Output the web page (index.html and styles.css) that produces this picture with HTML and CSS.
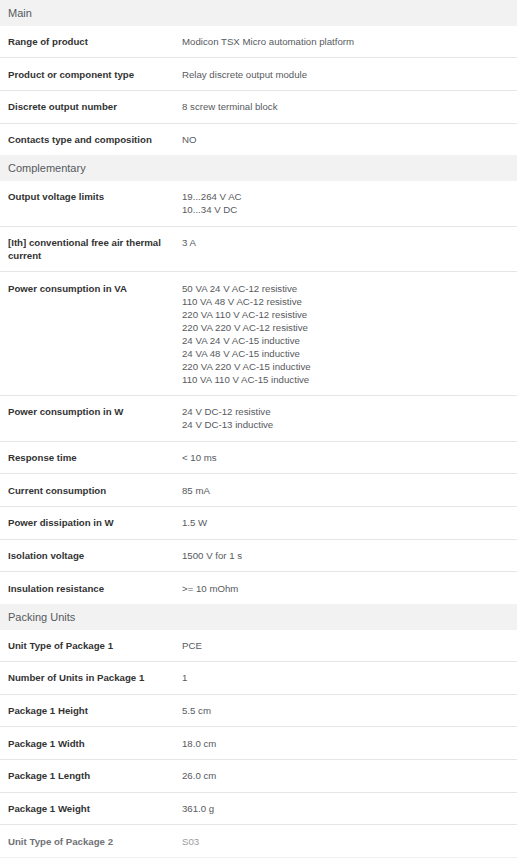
FILE: index.html
```html
<!DOCTYPE html>
<html lang="en">
<head>
<meta charset="utf-8">
<title>Characteristics</title>
<link rel="stylesheet" href="styles.css">
</head>
<body>
<div class="specs">
  <section class="group">
    <h2 class="group-title">Main</h2>
    <div class="row"><div class="label">Range of product</div><div class="value">Modicon TSX Micro automation platform</div></div>
    <div class="row"><div class="label">Product or component type</div><div class="value">Relay discrete output module</div></div>
    <div class="row"><div class="label">Discrete output number</div><div class="value">8 screw terminal block</div></div>
    <div class="row"><div class="label">Contacts type and composition</div><div class="value">NO</div></div>
  </section>
  <section class="group">
    <h2 class="group-title">Complementary</h2>
    <div class="row"><div class="label">Output voltage limits</div><div class="value">19...264 V AC<br>10...34 V DC</div></div>
    <div class="row"><div class="label">[Ith] conventional free air thermal current</div><div class="value">3 A</div></div>
    <div class="row"><div class="label">Power consumption in VA</div><div class="value">50 VA 24 V AC-12 resistive<br>110 VA 48 V AC-12 resistive<br>220 VA 110 V AC-12 resistive<br>220 VA 220 V AC-12 resistive<br>24 VA 24 V AC-15 inductive<br>24 VA 48 V AC-15 inductive<br>220 VA 220 V AC-15 inductive<br>110 VA 110 V AC-15 inductive</div></div>
    <div class="row"><div class="label">Power consumption in W</div><div class="value">24 V DC-12 resistive<br>24 V DC-13 inductive</div></div>
    <div class="row"><div class="label">Response time</div><div class="value">&lt; 10 ms</div></div>
    <div class="row"><div class="label">Current consumption</div><div class="value">85 mA</div></div>
    <div class="row"><div class="label">Power dissipation in W</div><div class="value">1.5 W</div></div>
    <div class="row"><div class="label">Isolation voltage</div><div class="value">1500 V for 1 s</div></div>
    <div class="row"><div class="label">Insulation resistance</div><div class="value">&gt;= 10 mOhm</div></div>
  </section>
  <section class="group">
    <h2 class="group-title">Packing Units</h2>
    <div class="row"><div class="label">Unit Type of Package 1</div><div class="value">PCE</div></div>
    <div class="row"><div class="label">Number of Units in Package 1</div><div class="value">1</div></div>
    <div class="row"><div class="label">Package 1 Height</div><div class="value">5.5 cm</div></div>
    <div class="row"><div class="label">Package 1 Width</div><div class="value">18.0 cm</div></div>
    <div class="row"><div class="label">Package 1 Length</div><div class="value">26.0 cm</div></div>
    <div class="row"><div class="label">Package 1 Weight</div><div class="value">361.0 g</div></div>
    <div class="row row-faded"><div class="label">Unit Type of Package 2</div><div class="value">S03</div></div>
  </section>
</div>
</body>
</html>
```

FILE: styles.css
```css
html, body {
  margin: 0;
  padding: 0;
  background: #ffffff;
}

body {
  font-family: "Liberation Sans", Arial, sans-serif;
  width: 517px;
}

.specs {
  display: flex;
  flex-direction: column;
}

.group-title {
  margin: 0;
  height: 25.67px;
  box-sizing: border-box;
  padding: 0 8px;
  display: flex;
  align-items: center;
  background: #f2f2f2;
  font-size: 11px;
  font-weight: normal;
  color: #555a60;
}

.row {
  display: grid;
  grid-template-columns: 182px 1fr;
  border-bottom: 1px solid #e6e6e6;
  padding: 9.33px 0;
  font-size: 9.67px;
  line-height: 13px;
}

.group .row:last-child {
  border-bottom: none;
}

.group .row.row-faded {
  border-bottom: 1px solid #f0f0f0;
}

.label {
  padding: 0 16px 0 8px;
  font-weight: bold;
  color: #333333;
}

.value {
  padding: 0 8px 0 0;
  color: #575a5e;
}

.row-faded .label {
  color: #6f7276;
}

.row-faded .value {
  color: #9a9ca0;
}
```
